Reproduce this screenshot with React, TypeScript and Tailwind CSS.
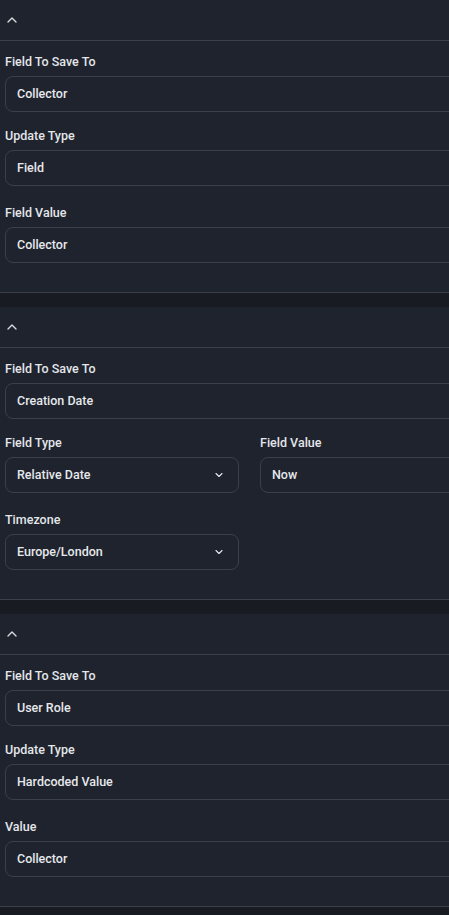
import React from 'react';
import { ChevronUp, ChevronDown } from 'lucide-react';

type Field = {
  label: string;
  value: string;
  select?: boolean;
};

type Row = Field[];

interface CardProps {
  rows: Row[];
}

const FieldBox: React.FC<{ field: Field }> = ({ field }) => (
  <div className="flex flex-col">
    <label className="mb-[5px] text-[12.5px] leading-[18px] font-medium text-[#e4e6ea]">
      {field.label}
    </label>
    <div className="flex h-[36px] items-center justify-between rounded-lg border border-[#3a3f4a] pl-[11px] pr-[13px] text-[12.5px] font-medium text-[#e6e8ec]">
      <span>{field.value}</span>
      {field.select && <ChevronDown size={12} strokeWidth={2.25} className="text-[#e6e8ec]" />}
    </div>
  </div>
);

const Card: React.FC<CardProps> = ({ rows }) => (
  <div className="border-b border-[#3a3f4a] bg-[#1e232d]">
    <div className="flex h-[41px] items-center border-b border-[#3a3f4a] px-1">
      <ChevronUp size={16} strokeWidth={2} className="text-[#d8dbe0]" />
    </div>
    <div className="px-[5px] pt-[12px] pb-[29px]">
      {rows.map((row, i) => (
        <div
          key={i}
          className={
            'grid grid-cols-[234px_1fr] gap-[21px] ' +
            (i === 0 ? '' : i === 1 ? 'mt-[15px]' : 'mt-[18px]')
          }
        >
          {row.length > 1 ? (
            row.map((f) => <FieldBox key={f.label} field={f} />)
          ) : row[0].select ? (
            <FieldBox field={row[0]} />
          ) : (
            <div className="col-span-2">
              <FieldBox field={row[0]} />
            </div>
          )}
        </div>
      ))}
    </div>
  </div>
);

export default function App() {
  return (
    <div
      className="h-[915px] w-[449px] overflow-hidden bg-[#181b21]"
      style={{ fontFamily: 'Roboto, "Noto Sans", sans-serif' }}
    >
      <div className="flex w-[500px] flex-col gap-[14px]">
        <Card
          rows={[
            [{ label: 'Field To Save To', value: 'Collector' }],
            [{ label: 'Update Type', value: 'Field' }],
            [{ label: 'Field Value', value: 'Collector' }],
          ]}
        />
        <Card
          rows={[
            [{ label: 'Field To Save To', value: 'Creation Date' }],
            [
              { label: 'Field Type', value: 'Relative Date', select: true },
              { label: 'Field Value', value: 'Now' },
            ],
            [{ label: 'Timezone', value: 'Europe/London', select: true }],
          ]}
        />
        <Card
          rows={[
            [{ label: 'Field To Save To', value: 'User Role' }],
            [{ label: 'Update Type', value: 'Hardcoded Value' }],
            [{ label: 'Value', value: 'Collector' }],
          ]}
        />
      </div>
    </div>
  );
}
